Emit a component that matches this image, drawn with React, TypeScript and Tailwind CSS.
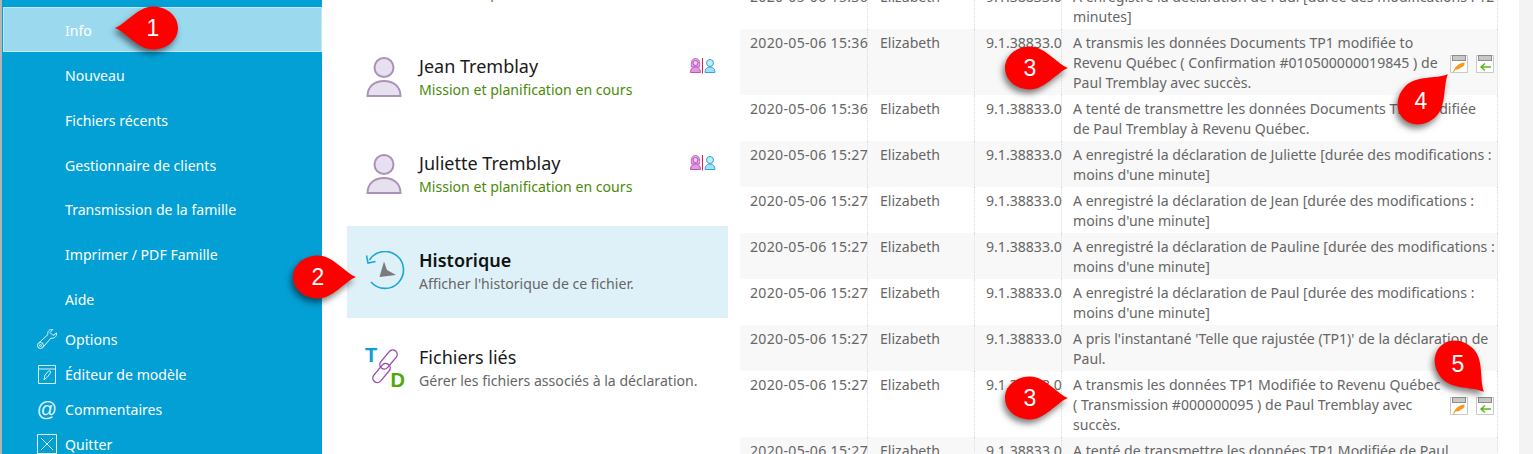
import { ReactNode } from "react";

const FONT = "font-['Noto_Sans','Open_Sans',sans-serif]";

const NAV = ["Nouveau", "Fichiers récents", "Gestionnaire de clients", "Transmission de la famille", "Imprimer / PDF Famille", "Aide"];

type LogRow = { date: string; text: ReactNode; lines: 2 | 3; actions?: boolean };

const ROWS: LogRow[] = [
  { date: "2020-05-06 15:36", lines: 2, text: <>A enregistré la déclaration de Paul [durée des modifications : 12<br />minutes]</> },
  { date: "2020-05-06 15:36", lines: 3, actions: true, text: <>A transmis les données Documents TP1 modifiée to<br />Revenu Québec ( Confirmation #010500000019845 ) de<br />Paul Tremblay avec succès.</> },
  { date: "2020-05-06 15:36", lines: 2, text: <>A tenté de transmettre les données Documents TP1 modifiée<br />de Paul Tremblay à Revenu Québec.</> },
  { date: "2020-05-06 15:27", lines: 2, text: <>A enregistré la déclaration de Juliette [durée des modifications :<br />moins d'une minute]</> },
  { date: "2020-05-06 15:27", lines: 2, text: <>A enregistré la déclaration de Jean [durée des modifications :<br />moins d'une minute]</> },
  { date: "2020-05-06 15:27", lines: 2, text: <>A enregistré la déclaration de Pauline [durée des modifications :<br />moins d'une minute]</> },
  { date: "2020-05-06 15:27", lines: 2, text: <>A enregistré la déclaration de Paul [durée des modifications :<br />moins d'une minute]</> },
  { date: "2020-05-06 15:27", lines: 2, text: <>A pris l'instantané 'Telle que rajustée (TP1)' de la déclaration de<br />Paul.</> },
  { date: "2020-05-06 15:27", lines: 3, actions: true, text: <>A transmis les données TP1 Modifiée to Revenu Québec<br />( Transmission #000000095 ) de Paul Tremblay avec<br />succès.</> },
  { date: "2020-05-06 15:27", lines: 2, text: <>A tenté de transmettre les données TP1 Modifiée de Paul<br />Tremblay à Revenu Québec.</> },
];

function Callout({ n, angle, className }: { n: number; angle: number; className: string }) {
  return (
    <div className={`absolute h-[100px] w-[100px] ${className}`}>
      <svg width="100" height="100" viewBox="-50 -50 100 100" className="drop-shadow-[-2px_4px_3px_rgba(0,0,0,0.5)]">
        <path transform={`rotate(${angle})`} d="M38 0C26 -5 15 -21.5 0 -21.5C-14 -21.5 -25 -12 -25 0C-25 12 -14 21.5 0 21.5C15 21.5 26 5 38 0Z" fill="#ff0000" />
      </svg>
      <span className="absolute inset-0 flex items-center justify-center font-['Liberation_Sans',sans-serif] text-[23px] text-white">{n}</span>
    </div>
  );
}

function PersonIcon() {
  return (
    <svg width="36" height="40" viewBox="0 0 36 40" className="shrink-0">
      <circle cx="18" cy="10.5" r="9.5" fill="#e7e0ee" stroke="#ab92ba" strokeWidth="2" />
      <path d="M1.5 39C1.5 29 9 24 18 24C27 24 34.5 29 34.5 39Z" fill="#e7e0ee" stroke="#ab92ba" strokeWidth="2" />
    </svg>
  );
}

function Spouses() {
  return (
    <svg width="26" height="16" viewBox="0 0 26 16" className="shrink-0">
      <path d="M1.5 9C0.5 3 2.5 0.5 5.5 0.5C8.5 0.5 10.5 3 9.5 9Z" fill="#e8a6e4" stroke="#c261c4" />
      <circle cx="5.5" cy="5" r="2.5" fill="#f3d2f0" stroke="#b24fb8" />
      <path d="M0.5 14.5C0.5 10.5 3 9 5.5 9C8 9 10.5 10.5 10.5 14.5Z" fill="#e199de" stroke="#bb55bb" />
      <path d="M12.5 0V15.5" stroke="#d4263c" />
      <circle cx="20" cy="5" r="3.5" fill="#c5e9f7" stroke="#2ea8dc" />
      <path d="M15 14.5C15 10.5 17.5 9 20 9C22.5 9 25 10.5 25 14.5Z" fill="#a8ddf3" stroke="#2ea8dc" />
    </svg>
  );
}

function HistoryIcon() {
  return (
    <svg width="40" height="40" viewBox="0 0 40 40" className="shrink-0">
      <path d="M3.4 9A18.5 18.5 0 1 1 5 31" fill="none" stroke="#1ba6d8" strokeWidth="1.6" />
      <path d="M0.5 4.5L2 12L9.5 10.5" fill="none" stroke="#1ba6d8" strokeWidth="1.6" />
      <path d="M18 10.5L21 19L30 24L13.5 26Z" fill="#7b7b7b" />
    </svg>
  );
}

function LinkedIcon() {
  return (
    <div className="relative h-[40px] w-[40px] shrink-0 font-['Liberation_Sans',sans-serif] text-[20px] leading-none font-bold">
      <span className="absolute top-[-3px] left-[-1px] text-[#0a9fd8]">T</span>
      <span className="absolute right-[1px] bottom-[-2px] text-[#4fa80a]">D</span>
      <svg width="40" height="40" viewBox="0 0 40 40" className="absolute inset-0">
        <g fill="none" stroke="#9a4fa8" strokeWidth="1.4">
          <rect x="18" y="0.5" width="9" height="22" rx="4.5" transform="rotate(40 22.5 11.5)" />
          <rect x="11" y="14" width="9" height="22" rx="4.5" transform="rotate(40 15.5 25)" />
        </g>
      </svg>
    </div>
  );
}

function Floppy({ kind }: { kind: "feather" | "arrow" }) {
  return (
    <svg width="18" height="18" viewBox="0 0 18 18" className="shrink-0">
      <path d="M0.5 0.5H17.5V17.5H0.5Z" fill="#fff" stroke="#c9c9c9" />
      <rect x="2.5" y="0.5" width="13" height="5" fill="#c8c8c8" stroke="#8d8d8d" />
      {kind === "feather" ? (
        <path d="M3 16.5C5 13 7 8 14.5 7.5C15 10 13.5 12 11 12.5C9 14.5 7 14.5 5.5 14.5L4 17Z" fill="#f59a1f" />
      ) : (
        <path d="M15 12H5M9 8.5L5 12L9 15.5" fill="none" stroke="#5cb516" strokeWidth="1.4" />
      )}
    </svg>
  );
}

function FileItem({ icon, title, sub, subClass, titleClass, active, badge }: {
  icon: ReactNode; title: string; sub: string; subClass: string; titleClass?: string; active?: boolean; badge?: boolean;
}) {
  return (
    <div className={`flex h-[92px] items-start pt-[21px] pr-[12px] pl-[19px] ${active ? "bg-[#dff1f8]" : ""}`}>
      <div className="flex w-[53px] shrink-0 pt-[4px]">{icon}</div>
      <div className="min-w-0 flex-1">
        <div className={`text-[18px] leading-[26px] ${titleClass ?? "text-[#1a1a1a]"}`}>{title}</div>
        <div className={`mt-[1px] text-[14.1px] leading-[20px] ${subClass}`}>{sub}</div>
      </div>
      {badge && <div className="pt-[5px]"><Spouses /></div>}
    </div>
  );
}

export default function App() {
  return (
    <div className={`relative flex h-[454px] w-[1533px] overflow-hidden bg-white ${FONT}`}>
      {/* backstage menu */}
      <aside className="h-full w-[322px] shrink-0 border-l-2 border-[#b5b5b5] bg-[#03a0d6] pt-[7px] text-[14.1px] text-white">
        <div className="ml-px flex h-[45px] items-center border border-[#c4e8f5] bg-[#9bd9ef] pt-[2px] pl-[61px]">Info</div>
        <div className="pt-[1.2px]">
          {NAV.map((label) => (
            <div key={label} className="flex h-[44.8px] items-center pl-[63px]">{label}</div>
          ))}
        </div>
        <div>
          <div className="flex h-[35px] items-center">
            <div className="flex w-[63px] justify-end pr-[8px]">
              <svg width="20" height="20" viewBox="0 0 20 20" fill="none" stroke="#e4f6fc">
                <circle cx="3.5" cy="16.5" r="3" />
                <circle cx="3.5" cy="16.5" r="1" />
                <path d="M1.5 14.2L11 5.5C10 2.5 12.5 0 15.8 0.5L13 3.5L16 6.5L19.5 4C20 7.5 17 10 14 9L5.8 18.5" />
              </svg>
            </div>
            Options
          </div>
          <div className="flex h-[35px] items-center">
            <div className="flex w-[63px] justify-end pr-[9px]">
              <svg width="18" height="19" viewBox="0 0 18 19" fill="none" stroke="#d6f2fc">
                <path d="M0.5 0.5H17.5V18.5H0.5ZM0.5 4H17.5" />
                <path d="M6 15L7 10L11 5.5L13 7L9.5 12Z" />
              </svg>
            </div>
            Éditeur de modèle
          </div>
          <div className="flex h-[35px] items-center">
            <div className="flex w-[63px] justify-end pr-[8px] font-['Liberation_Sans',sans-serif] text-[20px] leading-none text-[#e4f6fc]">@</div>
            Commentaires
          </div>
          <div className="flex h-[35px] items-center">
            <div className="flex w-[63px] justify-end pr-[8px]">
              <svg width="20" height="20" viewBox="0 0 20 20" fill="none" stroke="#e4f6fc">
                <path d="M0.5 0.5H19.5V19.5H0.5ZM4 4L16 16M16 4L4 16" />
              </svg>
            </div>
            Quitter
          </div>
        </div>
      </aside>

      {/* files list */}
      <section className="-mt-[65px] ml-[25px] flex w-[381px] shrink-0 flex-col gap-[5px]">
        <FileItem icon={<PersonIcon />} title="Paul Tremblay" sub="Mission et planification en cours" subClass="text-[#4b8a0a]" badge />
        <FileItem icon={<PersonIcon />} title="Jean Tremblay" sub="Mission et planification en cours" subClass="text-[#4b8a0a]" badge />
        <FileItem icon={<PersonIcon />} title="Juliette Tremblay" sub="Mission et planification en cours" subClass="text-[#4b8a0a]" badge />
        <FileItem icon={<HistoryIcon />} title="Historique" sub="Afficher l'historique de ce fichier." subClass="text-[#666666]" titleClass="font-semibold text-[#111111]" active />
        <FileItem icon={<LinkedIcon />} title="Fichiers liés" sub="Gérer les fichiers associés à la déclaration." subClass="text-[#666666]" />
      </section>

      {/* history log */}
      <section className="-mt-[17px] ml-[12px] w-[758px] shrink-0 text-[14.1px] leading-[20px] text-[#666666]">
        {ROWS.map((row, i) => (
          <div key={i} className={`grid grid-cols-[128px_107px_87px_436px] ${i % 2 === 1 ? "bg-[#f8f8f8]" : ""} ${row.lines === 3 ? "h-[66px]" : "h-[46px]"}`}>
            <div className="border-r border-dotted border-[#dddddd] pt-[4px] pl-[10px] tracking-[0.3px] whitespace-nowrap">{row.date}</div>
            <div className="border-r border-dotted border-[#dddddd] pt-[4px] pl-[12px]">Elizabeth</div>
            <div className="border-r border-dotted border-[#dddddd] pt-[4px] pl-[11px]">9.1.38833.0</div>
            <div className="flex items-center justify-between border-r border-dotted border-[#dddddd] pr-[3px] pl-[11px]">
              <div className="h-full pt-[4px] whitespace-nowrap">{row.text}</div>
              {row.actions && (
                <div className="mt-[4px] flex gap-[8px]">
                  <Floppy kind="feather" />
                  <Floppy kind="arrow" />
                </div>
              )}
            </div>
          </div>
        ))}
      </section>

      <div className="ml-[21px] h-full flex-1 bg-[#f3f3f3]" />

      <Callout n={1} angle={180} className="top-[-22px] left-[103px]" />
      <Callout n={2} angle={0} className="top-[227px] left-[268px]" />
      <Callout n={3} angle={0} className="top-[18px] left-[980px]" />
      <Callout n={4} angle={-45} className="top-[51px] left-[1371px]" />
      <Callout n={3} angle={0} className="top-[348px] left-[980px]" />
      <Callout n={5} angle={47} className="top-[314px] left-[1408px]" />
    </div>
  );
}
